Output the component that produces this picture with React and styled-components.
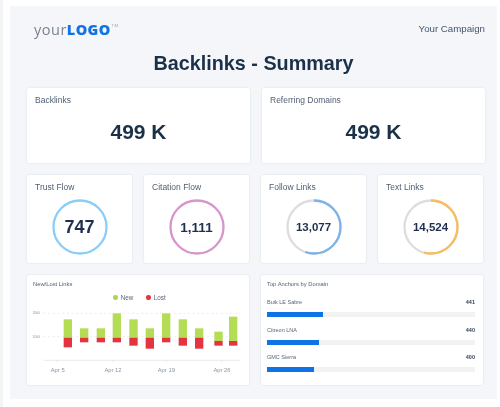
import styled, { createGlobalStyle } from "styled-components";

const GlobalStyle = createGlobalStyle`
    html, body {
        margin: 0;
        padding: 0;
        background: #fff;
    }
    body {
        font-family: "Liberation Sans", Arial, sans-serif;
    }
`

const Page = styled.div`
    width: 500px;
    height: 407px;
    box-sizing: border-box;
    overflow: hidden;
    padding: 6px 3px 8px 7px;
    border-left: 3px solid #f3f4f6;
    filter: blur(0.5px);
`
const Panel = styled.div`
    height: 100%;
    box-sizing: border-box;
    background-color: #f4f6f9;
    padding: 16px 12px 0 17px;
    display: flex;
    flex-direction: column;
`
const Header = styled.div`
    display: flex;
    justify-content: space-between;
    align-items: flex-start;
    height: 15px;
`
const Logo = styled.div`
    margin-left: 7px;
    margin-top: -1px;
    font-size: 14.5px;
    letter-spacing: 0.5px;
    color: #7b8391;
    font-family: "Open Sans", sans-serif;
    line-height: 17px;
    display: flex;
`
const LogoMark = styled.span`
    color: #0f72e5;
    font-weight: 800;
    letter-spacing: 0.4px;
`
const Tm = styled.span`
    font-size: 4px;
    line-height: 10px;
    color: #9aa1ab;
    margin-left: 1px;
`
const Campaign = styled.div`
    font-size: 9.7px;
    color: #44566c;
    line-height: 13px;
    margin-top: 0;
`
const Title = styled.h1`
    margin: 14px 0 13px;
    font-size: 19.8px;
    line-height: 24px;
    font-weight: 700;
    color: #1b3149;
    text-align: center;
    padding-right: 5px;
`
const Row = styled.div`
    display: grid;
    grid-template-columns: repeat(${(p) => p.$cols}, 1fr);
    column-gap: ${(p) => p.$gap}px;
    width: ${(p) => p.$width}px;
    height: ${(p) => p.$height}px;
    margin-bottom: 12px;
`
const Card = styled.div`
    background-color: #fff;
    border-radius: 2px;
    box-shadow: 0 0 2px rgba(40, 60, 90, 0.16);
    box-sizing: border-box;
    padding: 7px 8px;
    position: relative;
    display: flex;
    flex-direction: column;
`
const Label = styled.div`
    font-size: 8.5px;
    line-height: 11px;
    color: #4f5f73;
`
const BigValue = styled.div`
    font-size: 21px;
    line-height: 24px;
    font-weight: 700;
    color: #1b3149;
    text-align: center;
    margin-top: 14px;
`
const RingWrap = styled.div`
    position: relative;
    width: 56px;
    height: 56px;
    margin: 6px auto 0;
`
const RingValue = styled.div`
    position: absolute;
    inset: 0;
    display: flex;
    align-items: center;
    justify-content: center;
    font-weight: 700;
    font-size: ${(p) => p.$size}px;
    color: #1f2f4d;
`
const ChartCard = styled(Card)`
    padding: 5px 8px 0 6px;
`
const SmallTitle = styled.div`
    font-size: 5.8px;
    line-height: 8px;
    color: #4f5f73;
`
const Legend = styled.div`
    display: flex;
    justify-content: center;
    gap: 13px;
    margin-top: 5px;
    padding-left: 5px;
    font-size: 6.3px;
    line-height: 9px;
    color: #56657a;
`
const LegendItem = styled.div`
    display: flex;
    align-items: center;
    gap: 3px;
`
const Dot = styled.span`
    width: 4.5px;
    height: 4.5px;
    border-radius: 50%;
    background-color: ${(p) => p.$color};
`
const ChartSvg = styled.svg`
    position: absolute;
    left: 0;
    top: 0;
    width: 222px;
    height: 110px;
`
const Anchors = styled.div`
    display: flex;
    flex-direction: column;
    gap: 8.5px;
    margin-top: 10px;
`
const Anchor = styled.div`
    display: flex;
    flex-direction: column;
    gap: 6px;
`
const AnchorHead = styled.div`
    display: flex;
    justify-content: space-between;
    font-size: 5.5px;
    line-height: 8px;
    color: #56657a;
`
const AnchorCount = styled.span`
    font-weight: 700;
    color: #33445a;
`
const Track = styled.div`
    height: 5px;
    background-color: #f1f2f4;
`
const Fill = styled.div`
    height: 100%;
    width: ${(p) => p.$pct}%;
    background-color: #0f72e5;
`

const Ring = ({ color, pct, size, children }) => {
    const c = 2 * Math.PI * 26.5
    return (
        <RingWrap>
            <svg width="56" height="56" viewBox="0 0 56 56">
                <circle cx="28" cy="28" r="26.5" fill="none" stroke="#dddddd" strokeWidth="2.3" />
                <circle
                    cx="28"
                    cy="28"
                    r="26.5"
                    fill="none"
                    stroke={color}
                    strokeWidth="2.3"
                    strokeDasharray={`${(c * pct) / 100} ${c}`}
                    transform="rotate(-90 28 28)"
                />
            </svg>
            <RingValue $size={size}>{children}</RingValue>
        </RingWrap>
    )
}

// x, top of green, bottom of green, bottom of red, in zoomed chart units
const bars = [
    [146, 148, 203, 232],
    [195, 175, 203, 217],
    [245, 175, 203, 217],
    [293, 130, 203, 217],
    [343, 148, 203, 227],
    [392, 175, 203, 236],
    [441, 130, 203, 217],
    [491, 148, 203, 227],
    [540, 175, 203, 236],
    [598, 185, 213, 227],
    [642, 140, 213, 227],
]
const ticks = [
    [127, "Apr 5"],
    [293, "Apr 12"],
    [453, "Apr 19"],
    [620, "Apr 26"],
]

const Chart = () => (
    <ChartSvg viewBox="36 15 666 330">
        <g stroke="#e3e5e8" strokeWidth="2" strokeDasharray="7 7">
            <line x1="85" x2="677" y1="130" y2="130" />
            <line x1="85" x2="677" y1="200" y2="200" />
        </g>
        <line x1="85" x2="677" y1="271" y2="271" stroke="#dfe1e5" strokeWidth="2" />
        <text x="53" y="133" fontSize="10" fill="#8b95a3">2000</text>
        <text x="53" y="203" fontSize="10" fill="#8b95a3">1000</text>
        {bars.map(([x, top, mid, bottom]) => (
            <g key={x}>
                <rect x={x} y={top} width="25" height={mid - top} fill="#b4dc55" />
                <rect x={x} y={mid} width="25" height={bottom - mid} fill="#e4343f" />
            </g>
        ))}
        {ticks.map(([x, text]) => (
            <g key={text}>
                <line x1={x} x2={x} y1="271" y2="276" stroke="#dfe1e5" strokeWidth="2" />
                <text x={x + 1} y="306" fontSize="17.5" fill="#8a94a3" textAnchor="middle">{text}</text>
            </g>
        ))}
    </ChartSvg>
)

const App = () => {
    return (
        <Page>
            <GlobalStyle />
            <Panel>
                <Header>
                    <Logo>your<LogoMark>LOGO</LogoMark><Tm>TM</Tm></Logo>
                    <Campaign>Your Campaign</Campaign>
                </Header>
                <Title>Backlinks - Summary</Title>
                <Row $cols={2} $gap={12} $width={458} $height={75}>
                    <Card>
                        <Label>Backlinks</Label>
                        <BigValue>499 K</BigValue>
                    </Card>
                    <Card>
                        <Label>Referring Domains</Label>
                        <BigValue>499 K</BigValue>
                    </Card>
                </Row>
                <Row $cols={4} $gap={12} $width={456} $height={88}>
                    <Card>
                        <Label>Trust Flow</Label>
                        <RingWrap>
                            <svg width="56" height="56" viewBox="0 0 56 56">
                                <circle cx="28" cy="28" r="26.5" fill="none" stroke="#8ccdf8" strokeWidth="2.3" />
                            </svg>
                            <RingValue $size={18}>747</RingValue>
                        </RingWrap>
                    </Card>
                    <Card>
                        <Label>Citation Flow</Label>
                        <RingWrap>
                            <svg width="56" height="56" viewBox="0 0 56 56">
                                <circle cx="28" cy="28" r="26.5" fill="none" stroke="#d895cc" strokeWidth="2.3" />
                            </svg>
                            <RingValue $size={13.5}>1,111</RingValue>
                        </RingWrap>
                    </Card>
                    <Card>
                        <Label>Follow Links</Label>
                        <Ring color="#7cb4ea" pct={55} size={11.5}>13,077</Ring>
                    </Card>
                    <Card>
                        <Label>Text Links</Label>
                        <Ring color="#f7bd5f" pct={54} size={11.5}>14,524</Ring>
                    </Card>
                </Row>
                <Row $cols={2} $gap={12} $width={456} $height={110}>
                    <ChartCard>
                        <SmallTitle>New/Lost Links</SmallTitle>
                        <Legend>
                            <LegendItem><Dot $color="#a8d84e" />New</LegendItem>
                            <LegendItem><Dot $color="#e4343f" />Lost</LegendItem>
                        </Legend>
                        <Chart />
                    </ChartCard>
                    <ChartCard>
                        <SmallTitle>Top Anchors by Domain</SmallTitle>
                        <Anchors>
                            <Anchor>
                                <AnchorHead>Buik LE Sabre<AnchorCount>441</AnchorCount></AnchorHead>
                                <Track><Fill $pct={27} /></Track>
                            </Anchor>
                            <Anchor>
                                <AnchorHead>Citreon LNA<AnchorCount>440</AnchorCount></AnchorHead>
                                <Track><Fill $pct={25} /></Track>
                            </Anchor>
                            <Anchor>
                                <AnchorHead>GMC Sierra<AnchorCount>400</AnchorCount></AnchorHead>
                                <Track><Fill $pct={22.5} /></Track>
                            </Anchor>
                        </Anchors>
                    </ChartCard>
                </Row>
            </Panel>
        </Page>
    )
}

export default App
